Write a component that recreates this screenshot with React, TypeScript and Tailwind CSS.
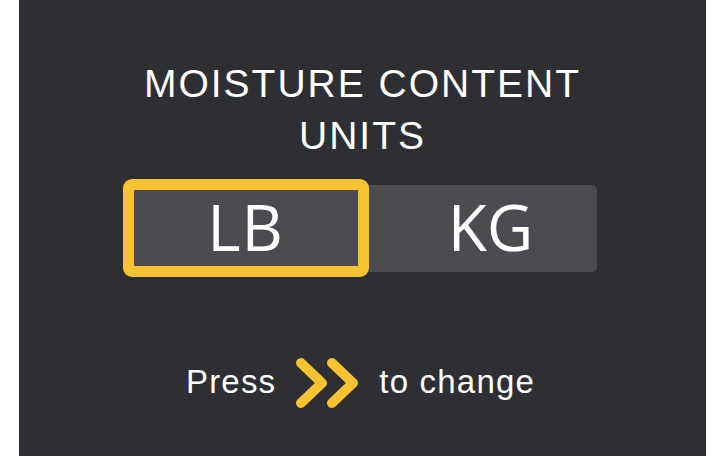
import React from "react";

function Chevrons() {
  return (
    <svg width="68" height="52" viewBox="0 0 68 52" fill="none" className="block">
      <path d="M8 6 L29 26 L8 46" stroke="#f7c331" strokeWidth="10" strokeLinecap="round" strokeLinejoin="round" />
      <path d="M39 6 L60 26 L39 46" stroke="#f7c331" strokeWidth="10" strokeLinecap="round" strokeLinejoin="round" />
    </svg>
  );
}

export default function App() {
  return (
    <div className="w-[718px] h-[462px] bg-white">
      <div className="ml-[19px] w-[687px] h-[456px] bg-[#2e2f33] flex flex-col items-center pt-[58px]">
        <div className="text-white text-[39px] leading-[52px] tracking-[2px] text-center font-['Liberation_Sans',Arial,sans-serif]">
          <div>MOISTURE CONTENT</div>
          <div>UNITS</div>
        </div>
        <div className="mt-[23px] flex w-[468px] h-[87px] rounded-[5px] bg-[#4a4c52]">
          <div className="relative w-[234px] flex items-center justify-center">
            <div className="absolute -left-[6px] -right-[6px] -top-[6px] -bottom-[5px] border-[11px] border-[#f7c331] rounded-[9px]" />
            <span className="relative text-white text-[64px] leading-none font-medium tracking-[1px] font-['Open_Sans',sans-serif] -mt-[3px]">
              LB
            </span>
          </div>
          <div className="flex-1 flex items-center justify-center pl-[22px]">
            <span className="text-white text-[64px] leading-none font-medium tracking-[0px] font-['Open_Sans',sans-serif] -mt-[3px]">
              KG
            </span>
          </div>
        </div>
        <div className="mt-[85px] w-full flex items-start justify-center pr-[4px] text-white text-[33px] leading-[33px] tracking-[1.2px] font-['Liberation_Sans',Arial,sans-serif]">
          <span className="mt-[8px]">Press</span>
          <div className="ml-[17px]">
            <Chevrons />
          </div>
          <span className="mt-[8px] ml-[18px]">to change</span>
        </div>
      </div>
    </div>
  );
}
